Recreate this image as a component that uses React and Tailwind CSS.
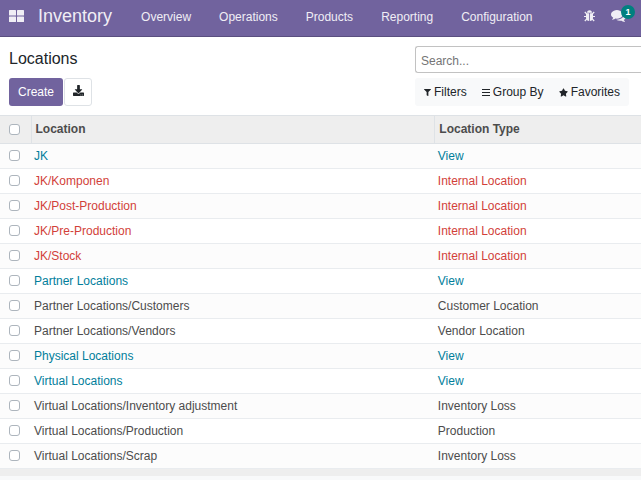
import React, { useState } from "react";
import { FaDownload, FaFilter, FaStar } from "react-icons/fa";

const menuItems = [
  "Overview",
  "Operations",
  "Products",
  "Reporting",
  "Configuration",
];

const locations = [
  { name: "JK", type: "View" },
  { name: "JK/Komponen", type: "Internal Location" },
  { name: "JK/Post-Production", type: "Internal Location" },
  { name: "JK/Pre-Production", type: "Internal Location" },
  { name: "JK/Stock", type: "Internal Location" },
  { name: "Partner Locations", type: "View" },
  { name: "Partner Locations/Customers", type: "Customer Location" },
  { name: "Partner Locations/Vendors", type: "Vendor Location" },
  { name: "Physical Locations", type: "View" },
  { name: "Virtual Locations", type: "View" },
  { name: "Virtual Locations/Inventory adjustment", type: "Inventory Loss" },
  { name: "Virtual Locations/Production", type: "Production" },
  { name: "Virtual Locations/Scrap", type: "Inventory Loss" },
];

// Views are teal, internal locations red, the rest keep the body colour
const rowColor = (type) => {
  if (type === "View") return "text-[#017e9b]";
  if (type === "Internal Location") return "text-[#d23f3a]";
  return "text-[#4c4c4c]";
};

const AppsIcon = () => (
  <svg viewBox="0 0 15 12" className="w-[15px] h-3" fill="currentColor">
    <rect x="0" y="0" width="7" height="5.5" rx="0.6" />
    <rect x="8" y="0" width="7" height="5.5" rx="0.6" />
    <rect x="0" y="6.5" width="7" height="5.5" rx="0.6" />
    <rect x="8" y="6.5" width="7" height="5.5" rx="0.6" />
  </svg>
);

const BugIcon = () => (
  <svg viewBox="0 0 11 12" className="w-[11px] h-3" fill="currentColor">
    <path d="M3 2.8a2.5 2.5 0 0 1 5 0z" />
    <path d="M2 3.3H5.1V11C3.2 10.9 2 9.6 2 8z" />
    <path d="M9 3.3H5.9V11C7.8 10.9 9 9.6 9 8z" />
    <path
      d="M0.8 2l2 2M10.2 2l-2 2M0 6.5h3M11 6.5H8M0.8 11l2-2M10.2 11l-2-2"
      stroke="currentColor"
      strokeWidth="1.2"
      fill="none"
    />
  </svg>
);

const CommentsIcon = () => (
  <svg viewBox="0 0 1792 1408" className="w-[15px] h-3" fill="currentColor">
    <path d="M1408 512q0 139-94 257t-256.500 186.500-353.500 68.500q-86 0-176-16-124 88-278 128-36 9-86 16h-3q-11 0-20.500-8t-11.500-21q-1-3-1-6.500t.5-6.500 2-6l2.500-5 3.500-5.500 4-5 4.500-5 4-4.500q5-6 23-25t26-29.500 22.500-29 25-38.500 20.500-44q-124-72-195-177t-71-224q0-139 94-257t256.500-186.500 353.500-68.500 353.500 68.500 256.500 186.500 94 257z" />
    <path d="M1792 768q0 120-71 224.500t-195 176.500q10 24 20.500 44t25 38.500 22.500 29 26 29.500 23 25q1 1 4 4.500t4.500 5 4 5 3.500 5.500l2.500 5 2 6 .5 6.500-1 6.500q-3 14-13 22t-22 7q-50-7-86-16-154-40-278-128-90 16-176 16-271 0-472-132 58 4 88 4 161 0 309-45t264-129q125-92 192-212t67-254q0-77-23-152 129 71 204 178t75 230z" />
  </svg>
);

// Thinner rules than the stock bars icon
const GroupIcon = () => (
  <svg viewBox="0 0 8 8" className="w-2 h-2" fill="currentColor">
    <rect y="1" width="8" height="1" />
    <rect y="4" width="8" height="1" />
    <rect y="7" width="8" height="1" />
  </svg>
);

const Checkbox = ({ label }) => (
  <input
    type="checkbox"
    aria-label={label}
    className="block appearance-none w-[11px] h-[11px] rounded-[3px] border border-[#adb5bd] bg-white checked:bg-[#71639e]"
  />
);

const Navbar = () => (
  <header className="flex items-center h-[37px] pb-1 pl-[9px] pr-[15px] bg-[#71639e] border-b border-[#5a4f7f] text-[#f0eef5]">
    <button type="button" aria-label="Apps">
      <AppsIcon />
    </button>
    <a href="#inventory" className="ml-[14px] text-lg leading-6">
      Inventory
    </a>
    <nav className="flex flex-1 ml-[29px] gap-7 pt-px text-xs">
      {menuItems.map((item) => (
        <a key={item} href={`#${item.toLowerCase()}`}>
          {item}
        </a>
      ))}
    </nav>
    <div className="flex items-center gap-4">
      <button type="button" aria-label="Debug">
        <BugIcon />
      </button>
      <button type="button" aria-label="Messages" className="relative">
        <CommentsIcon />
        <span className="absolute left-[10px] -top-[5px] w-[14px] h-[14px] rounded-full bg-[#00807f] text-white text-[9px] font-bold leading-[14px] text-center">
          1
        </span>
      </button>
    </div>
  </header>
);

const ControlPanel = () => {
  const [query, setQuery] = useState("");

  return (
    <div className="flex h-[78px] bg-white">
      <div className="flex-1 pl-[9px] pt-3">
        <h1 className="text-base leading-5 text-[#212529]">Locations</h1>
        <div className="flex gap-px mt-[9px]">
          <button
            type="button"
            className="h-7 px-[9px] rounded-[3px] bg-[#71639e] text-white text-xs"
          >
            Create
          </button>
          <button
            type="button"
            aria-label="Export"
            className="flex items-center justify-center w-7 h-7 pb-1 rounded-[3px] border border-[#dee2e6] text-[#212529]"
          >
            <FaDownload size={11} />
          </button>
        </div>
      </div>

      <div className="w-[226px] pt-[9px]">
        <input
          type="text"
          aria-label="Search"
          placeholder="Search..."
          value={query}
          onChange={(e) => setQuery(e.target.value)}
          className="block w-full h-[27px] pt-[2px] pl-[5px] rounded-l-[3px] border border-r-0 border-[#c2c2c2] text-xs outline-none placeholder:text-[#757575]"
        />
        <div className="flex items-center justify-between h-7 mt-[5px] mr-3 px-[9px] rounded-[3px] bg-[#f8f9fa] text-xs text-[#212529]">
          <button type="button" className="flex items-center gap-[3px]">
            <FaFilter size={7} />
            Filters
          </button>
          <button type="button" className="flex items-center gap-[3px]">
            <GroupIcon />
            Group By
          </button>
          <button type="button" className="flex items-center gap-[3px]">
            <FaStar size={9} />
            Favorites
          </button>
        </div>
      </div>
    </div>
  );
};

const LocationTable = () => (
  <table className="w-full table-fixed border-collapse text-xs text-left">
    <colgroup>
      <col className="w-[31px]" />
      <col className="w-[63%]" />
      <col />
    </colgroup>
    <thead>
      <tr className="h-7 bg-[#eeeeee] border-y border-[#dee2e6] text-[#4c4c4c]">
        <th className="pl-[9px]">
          <Checkbox label="Select all" />
        </th>
        <th className="pl-1 pb-[2px] border-l border-[#dee2e6] font-bold">
          Location
        </th>
        <th className="pl-1 pb-[2px] border-l border-[#dee2e6] font-bold">
          Location Type
        </th>
      </tr>
    </thead>
    <tbody>
      {locations.map(({ name, type }) => (
        <tr
          key={name}
          className={`h-[25px] border-b border-[#e9ecef] odd:bg-[#fcfcfc] even:bg-white ${rowColor(type)}`}
        >
          <td className="pl-[9px] pb-px">
            <Checkbox label={`Select ${name}`} />
          </td>
          <td className="pl-[3px]">{name}</td>
          <td className="pl-[3px]">{type}</td>
        </tr>
      ))}
    </tbody>
    <tfoot>
      <tr className="h-[7px] bg-[#eeeeee]">
        <td colSpan={3} />
      </tr>
    </tfoot>
  </table>
);

export default function App() {
  return (
    <div className="min-h-screen bg-[#f8f9fa] font-['Liberation_Sans',Arial,sans-serif]">
      <Navbar />
      <ControlPanel />
      <LocationTable />
    </div>
  );
}
